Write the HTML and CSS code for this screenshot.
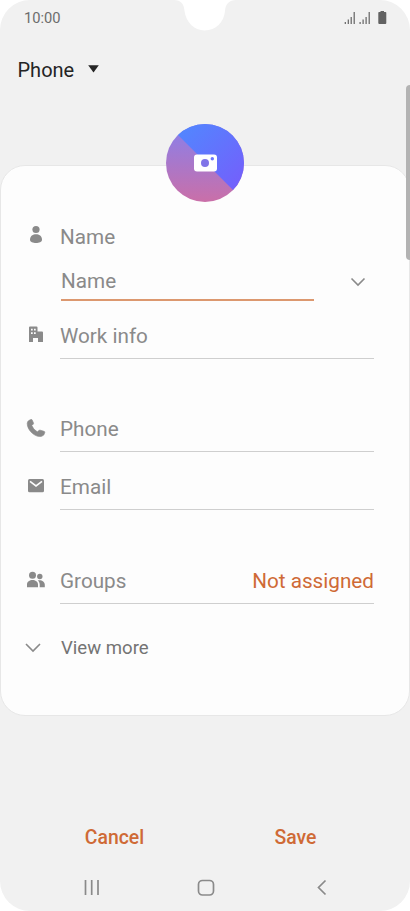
FILE: index.html
```html
<!DOCTYPE html>
<html lang="en">
<head>
<meta charset="utf-8">
<title>New contact</title>
<link rel="stylesheet" href="styles.css">
</head>
<body>
<main class="screen">
  <svg class="notch" width="62" height="31" viewBox="0 0 62 31"><path d="M0 0C7 0 10 4 10.500 11C12 22 20 30.500 30.500 30.500C42 30.500 50 22 51 11C51.500 4 55 0 62 0Z" fill="#fff"/></svg>
  <header class="status">
    <span>10:00</span>
    <svg width="44" height="14" viewBox="0 0 44 14" fill="#626262"><path d="M.7 11h1.200v2H.7zM3.700 8.500h1.200V13H3.700zM6.600 6h1.200v7H6.600zM9.600 1h1.200v12H9.600zM15.500 11h1.200v2h-1.200zM18.500 8.500h1.200V13h-1.200zM21.500 6h1.200v7h-1.200zM24.600 1h1.200v12h-1.200zM36.500 0h3.500v1h1.500q.8 0 .8.8V12q0 1-1 1h-6q-1 0-1-1V1.800q0-.8.8-.8h1.400z"/></svg>
  </header>
  <div class="account"><span>Phone</span><svg width="11" height="8" viewBox="0 0 11 8"><path d="M.2.200h10.600L5.500 7.400z" fill="#252525"/></svg></div>
  <section class="card">
    <svg class="avatar" width="78" height="78" viewBox="0 0 78 78">
      <defs>
        <linearGradient id="warm" x2="0" y2="1"><stop stop-color="#8780ed"/><stop offset="1" stop-color="#ca6fa8"/></linearGradient>
        <linearGradient id="cool" x2="1" y2="1"><stop stop-color="#4c8dff"/><stop offset="1" stop-color="#7959fb"/></linearGradient>
        <clipPath id="round"><circle cx="39" cy="39" r="39"/></clipPath>
      </defs>
      <g clip-path="url(#round)"><path d="M0 0h78v78H0z" fill="url(#warm)"/><path d="M0-1h78v78z" fill="url(#cool)"/></g>
      <rect x="28" y="30.500" width="23" height="17" rx="3" fill="#fff"/>
      <circle cx="39" cy="39" r="4" fill="#8074e8"/><circle cx="46.300" cy="34.800" r="1.700" fill="#6975ff"/>
    </svg>
    <div class="row name">
      <svg class="icon" width="20" height="20" viewBox="0 0 20 20"><circle cx="10" cy="4.500" r="3.600"/><path d="M4 14.700C4 7.500 16 7.500 16 14.700C16 19 4 19 4 14.700Z"/></svg>
      <div class="field bare">Name</div>
    </div>
    <div class="row entry">
      <div class="input">Name</div>
      <svg class="chevron" width="16" height="10" viewBox="0 0 16 10"><path d="M1.500 1.500L8 8l6.500-6.500"/></svg>
    </div>
    <div class="row">
      <svg class="icon" width="20" height="20" viewBox="0 0 20 20"><path fill-rule="evenodd" d="M4 1.500h6.500q1 0 1 1v4H16q1 0 1 1V17h-5v-4H7v4H3V2.500q0-1 1-1zM5 3.800v1.700h1.700V3.800zM8 3.800v1.700h1.700V3.800zM5 7.200v1.700h1.700V7.200zM8 7.200v1.700h1.700V7.200z"/></svg>
      <div class="field">Work info</div>
    </div>
    <div class="row phone">
      <svg class="icon" width="20" height="20" viewBox="0 0 20 20"><path d="M3.200 1.300L5 .4q.8-.2 1.200.6l1.300 3q.3.800-.5 1.400L5.800 6.600q1.700 4.200 5.500 6.200l1.600-1.300q.7-.6 1.500-.3l3.600 1.100q1.100.4.8 1.300-.4 3-3.100 3.700C9.500 19 1.100 11.300 1.200 4.500q0-2.300 2-3.200z" stroke="#8a8a8a" stroke-width=".6"/></svg>
      <div class="field">Phone</div>
    </div>
    <div class="row">
      <svg class="icon" width="20" height="20" viewBox="0 0 20 20"><rect x="2" y="3" width="16" height="13.300" rx="1.500"/><path d="M4 5.400l6 4.600 6-4.600" fill="none" stroke="#fdfdfd" stroke-width="1.600"/></svg>
      <div class="field">Email</div>
    </div>
    <div class="row groups">
      <svg class="icon" width="20" height="20" viewBox="0 0 20 20"><circle cx="6.500" cy="4.300" r="3.500"/><circle cx="13.800" cy="5.500" r="2.700"/><path d="M1 16.200v-2.700c0-6 11-6 11 0v2.700zM11.800 9.500c3.800-.8 7 1.300 7 4.200v2.500h-5.100v-2.500c0-1.800-.7-3.200-1.900-4.200z"/></svg>
      <div class="field">Groups<span class="accent">Not assigned</span></div>
    </div>
    <div class="more">
      <svg class="chevron" width="16" height="10" viewBox="0 0 16 10"><path d="M1 1l7 7 7-7"/></svg>
      <span>View more</span>
    </div>
  </section>
  <div class="actions"><span>Cancel</span><span>Save</span></div>
  <nav class="nav">
    <svg width="16" height="17" viewBox="0 0 16 17"><path d="M1.500 1v15M7.700 1v15M14 1v15"/></svg>
    <svg class="home" width="18" height="18" viewBox="0 0 18 18"><rect x="1.500" y="1.500" width="15" height="14.500" rx="4"/></svg>
    <svg width="10" height="17" viewBox="0 0 10 17"><path d="M8.500 1.500l-7 7 7 7"/></svg>
  </nav>
  <div class="scrollbar"></div>
</main>
</body>
</html>
```
FILE: styles.css
```css
body {
  margin: 0;
  background: #fff;
  font-family: Roboto, sans-serif;
}

.screen {
  position: relative;
  width: 410px;
  height: 911px;
  box-sizing: border-box;
  overflow: hidden;
  border-radius: 30px;
  background: #f1f1f1;
  color: #8a8a8a;
  font-size: 20.7px;
}

svg { display: block; flex: none; }

.notch {
  position: absolute;
  top: 0;
  left: 174px;
}

.status {
  display: flex;
  align-items: center;
  justify-content: space-between;
  height: 36px;
  padding: 0 22px 0 24px;
  color: #6c6c6c;
  font-size: 14.7px;
}

.account {
  display: flex;
  align-items: center;
  gap: 14px;
  height: 68px;
  padding-left: 17.5px;
  margin-bottom: 61px;
  color: #252525;
  font-size: 20px;
}

.account svg { margin-top: -2px; }

.card {
  height: 551px;
  box-sizing: border-box;
  border: 1px solid #e7e7e7;
  border-radius: 25px;
  background: #fdfdfd;
}

.avatar { margin: -42px auto 13px; }

.row {
  display: flex;
  height: 58px;
  padding: 0 35px 0 24px;
}

.icon {
  margin: 24px 15px 0 1px;
  fill: #8a8a8a;
}

.field {
  display: flex;
  flex: 1;
  align-items: center;
  justify-content: space-between;
  box-sizing: border-box;
  padding-top: 12px;
  margin-left: -1px;
  border-bottom: 1px solid #cfcfcf;
}

.name { height: 44px; }
.name .icon { margin-top: 10px; }
.bare { padding: 0; border: 0; }

.entry {
  height: 42px;
  justify-content: space-between;
  padding-left: 60px;
  box-sizing: border-box;
}

.input {
  display: flex;
  align-items: center;
  box-sizing: border-box;
  width: 253px;
  padding-top: 4px;
  border-bottom: 2px solid #dc986f;
}

.entry .chevron { margin: 18px 8px 0 0; }

.chevron {
  fill: none;
  stroke: #8a8a8a;
  stroke-width: 1.6;
}

.phone { margin-top: 35px; }
.phone .icon { margin-top: 25px; }
.groups { margin-top: 36px; }
.groups .icon { margin-top: 25px; }
.accent { color: #cf6a36; }

.more {
  display: flex;
  align-items: center;
  gap: 20px;
  height: 88px;
  padding-left: 24px;
  color: #747474;
  font-size: 18.6px;
}

.actions {
  display: grid;
  grid-template-columns: 181px 181px;
  align-items: center;
  height: 48px;
  margin: 97px 0 0 24px;
  color: #cf6a36;
  font-size: 19.4px;
  font-weight: 500;
  text-align: center;
}

.nav {
  display: flex;
  align-items: center;
  justify-content: space-between;
  height: 53px;
  padding: 0 83px 0 84px;
  fill: none;
  stroke: #8a8a8a;
  stroke-width: 1.7;
}

.home { margin-right: 5px; }

.scrollbar {
  position: absolute;
  top: 85px;
  right: 0;
  width: 4px;
  height: 175px;
  border-radius: 4px 0 0 4px;
  background: #b3b3b3;
}
```
